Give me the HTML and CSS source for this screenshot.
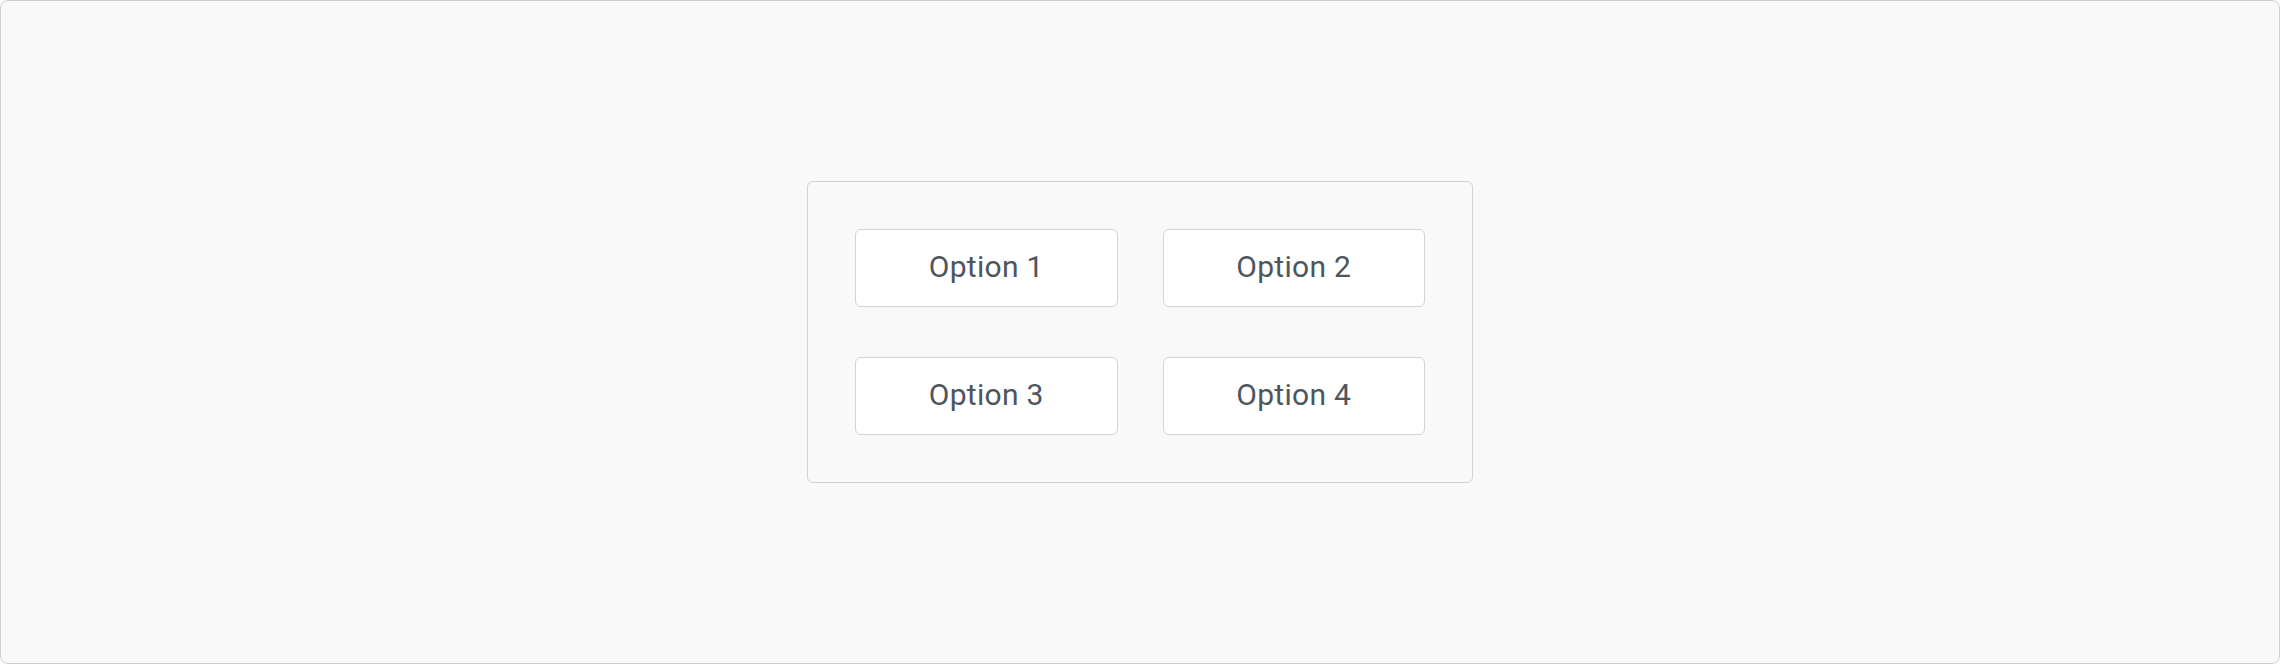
FILE: index.html
```html
<!DOCTYPE html>
<html>
<head>
<meta charset="utf-8">
<link rel="stylesheet" href="styles.css">
</head>
<body>
<div class="frame">
  <div class="panel">
    <button class="option">Option 1</button>
    <button class="option">Option 2</button>
    <button class="option">Option 3</button>
    <button class="option">Option 4</button>
  </div>
</div>
</body>
</html>
```
FILE: styles.css
```css
html, body {
  margin: 0;
  padding: 0;
  background: #ffffff;
}
.frame {
  box-sizing: border-box;
  width: 2280px;
  height: 664px;
  border: 1px solid #cfcfcf;
  border-radius: 8px;
  background: #f9f9f9;
  display: flex;
  align-items: center;
  justify-content: center;
}
.panel {
  box-sizing: border-box;
  width: 666px;
  height: 302px;
  padding: 47px;
  border: 1px solid #d2d2d2;
  border-radius: 6px;
  display: grid;
  grid-template-columns: 1fr 1fr;
  grid-template-rows: 78px 78px;
  column-gap: 45px;
  row-gap: 50px;
}
.option {
  box-sizing: border-box;
  margin: 0;
  border: 1px solid #d4d4d4;
  border-radius: 6px;
  background: #ffffff;
  font-family: Roboto, "Liberation Sans", sans-serif;
  font-size: 30px;
  font-weight: 400;
  letter-spacing: 0.3px;
  color: #4d565c;
  padding: 0 0 4px 0;
}
```
